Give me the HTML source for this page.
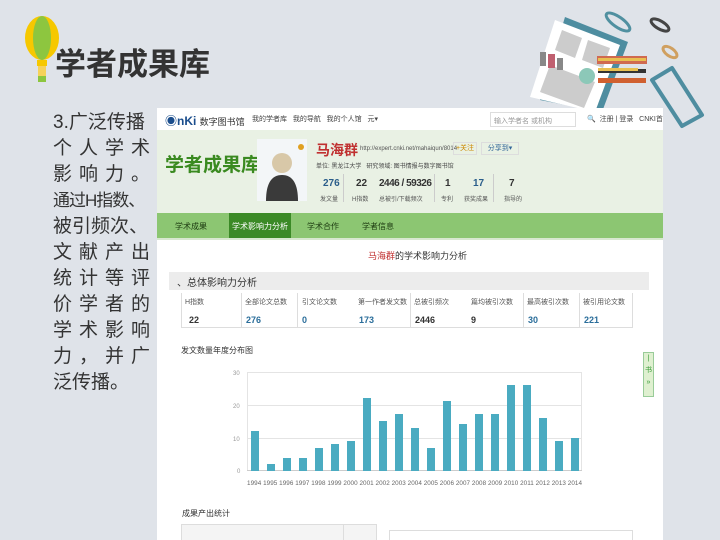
<!DOCTYPE html>
<html><head><meta charset="utf-8"><style>
*{margin:0;padding:0;box-sizing:border-box}
body{width:720px;height:540px;overflow:hidden;background:#dfe3e9;font-family:"Liberation Sans","Noto Sans CJK SC",sans-serif;position:relative;color:#333}
.a{position:absolute;white-space:nowrap}
.ln{position:absolute;left:53px;width:97px;display:flex;justify-content:space-between;font-size:19px;color:#333;line-height:22px;white-space:nowrap}
.sm{font-size:8px;color:#444}
</style></head><body>
<svg class="a" style="left:22px;top:16px" width="40" height="68" viewBox="0 0 40 68">
<ellipse cx="20" cy="22" rx="17" ry="22" fill="#f6c800"/>
<ellipse cx="20" cy="22" rx="9" ry="22" fill="#8dc63f"/>
<rect x="15" y="44" width="10" height="6" fill="#f6c800"/>
<rect x="16" y="50" width="8" height="10" fill="#f6d25a"/>
<rect x="16" y="60" width="8" height="6" fill="#8dc63f"/>
</svg>
<div class="a" style="left:55px;top:39px;font-size:31px;font-weight:bold;color:#333">学者成果库</div>
<svg class="a" style="left:520px;top:0" width="200" height="130" viewBox="0 0 200 130">
<polygon points="45,17 108,42 82,112 20,100" fill="#4e8da0"/>
<polygon points="35,20 100,45 75,112 10,97" fill="#fff"/>
<polygon points="42,30 62,38 55,58 35,50" fill="#ccc"/>
<polygon points="68,40 90,48 83,68 62,60" fill="#ccc"/>
<polygon points="30,65 75,82 64,108 20,92" fill="#ccc"/>
<rect x="20" y="52" width="6" height="14" fill="#888"/><rect x="28" y="54" width="7" height="14" fill="#c06070"/><rect x="37" y="58" width="6" height="12" fill="#888"/>
<circle cx="67" cy="76" r="8" fill="#8cc8b8"/>
<rect x="77" y="56" width="50" height="8" fill="#d06a50"/><rect x="78" y="58" width="48" height="3" fill="#e8c050"/>
<rect x="78" y="69" width="48" height="4" fill="#333"/><rect x="78" y="68" width="40" height="3" fill="#e8c050"/>
<rect x="78" y="78" width="48" height="5" fill="#d06030"/>
<ellipse cx="98" cy="22" rx="14" ry="5" fill="none" stroke="#5090a0" stroke-width="3" transform="rotate(35 98 22)"/>
<ellipse cx="140" cy="25" rx="10" ry="4" fill="none" stroke="#444" stroke-width="3" transform="rotate(30 140 25)"/>
<ellipse cx="150" cy="52" rx="8" ry="4" fill="none" stroke="#d0a060" stroke-width="3" transform="rotate(35 150 52)"/>
<polygon points="132,80 152,68 182,115 162,126" fill="none" stroke="#4e8da0" stroke-width="4" stroke-linejoin="round"/>
</svg>
<div class="ln" style="top:112px">3.广泛传播</div>
<div class="ln" style="top:138px"><span>个</span><span>人</span><span>学</span><span>术</span></div>
<div class="ln" style="top:164px"><span>影</span><span>响</span><span>力</span><span>。</span></div>
<div class="ln" style="top:190px;font-size:17px;letter-spacing:-1px">通过H指数、</div>
<div class="ln" style="top:216px">被引频次、</div>
<div class="ln" style="top:242px"><span>文</span><span>献</span><span>产</span><span>出</span></div>
<div class="ln" style="top:268px"><span>统</span><span>计</span><span>等</span><span>评</span></div>
<div class="ln" style="top:294px"><span>价</span><span>学</span><span>者</span><span>的</span></div>
<div class="ln" style="top:320px"><span>学</span><span>术</span><span>影</span><span>响</span></div>
<div class="ln" style="top:346px"><span>力</span><span>，</span><span>并</span><span>广</span></div>
<div class="ln" style="top:372px;justify-content:flex-start">泛传播。</div>
<div class="a" style="left:157px;top:108px;width:506px;height:432px;background:#fff;overflow:hidden">
 <div class="a" style="left:8px;top:4px;font-size:12px;font-weight:bold;color:#1a4d8c">◉nKi <span style="font-weight:normal;font-size:9px;color:#333">数字图书馆</span></div>
 <div class="a" style="left:95px;top:6px;font-size:7px;color:#444">我的学者库 &nbsp; 我的导航 &nbsp; 我的个人馆 &nbsp; 元▾</div>
 <div class="a" style="left:333px;top:4px;width:86px;height:15px;border:1px solid #ddd;font-size:7px;color:#999;padding:3px">输入学者名 或机构</div>
 <div class="a" style="left:430px;top:6px;font-size:7px;color:#444">🔍 &nbsp;注册 | 登录 &nbsp; CNKI首页</div>
 <div class="a" style="left:0;top:22px;width:506px;height:83px;background:#e9f1e4"></div>
 <div class="a" style="left:8px;top:42px;font-size:19px;font-weight:bold;color:#3a8a20">学者成果库</div>
 <div class="a" style="left:100px;top:31px;width:50px;height:62px;background:#f3f6f8"></div>
 <svg class="a" style="left:100px;top:31px" width="50" height="62"><circle cx="25" cy="24" r="10" fill="#d8c8a8"/><path d="M9 62 Q9 36 25 36 Q41 36 41 62Z" fill="#3a3a3a"/><circle cx="44" cy="8" r="3" fill="#e0a020"/></svg>
 <div class="a" style="left:159px;top:32px;font-size:14px;font-weight:bold;color:#c03030">马海群</div>
 <div class="a" style="left:203px;top:38px;font-size:6px;color:#555">http://expert.cnki.net/mahaiqun/8014</div>
 <div class="a" style="left:296px;top:34px;width:24px;height:13px;border:1px solid #ddd;font-size:7px;color:#c80;text-align:center;line-height:11px">+关注</div>
 <div class="a" style="left:324px;top:34px;width:38px;height:13px;border:1px solid #ddd;font-size:7px;color:#369;text-align:center;line-height:11px">分享到▾</div>
 <div class="a" style="left:159px;top:53px;font-size:6px;color:#444">单位: 黑龙江大学 &nbsp; 研究领域: 图书情报与数字图书馆</div>
 <div class="a" style="left:166px;top:70px;font-size:10px;font-weight:bold;color:#2a5d8a">276</div>
 <div class="a" style="left:199px;top:70px;font-size:10px;font-weight:bold">22</div>
 <div class="a" style="left:222px;top:70px;font-size:10px;font-weight:bold;letter-spacing:-0.5px">2446 / 59326</div>
 <div class="a" style="left:288px;top:70px;font-size:10px;font-weight:bold">1</div>
 <div class="a" style="left:316px;top:70px;font-size:10px;font-weight:bold;color:#2a5d8a">17</div>
 <div class="a" style="left:352px;top:70px;font-size:10px;font-weight:bold">7</div>
 <div class="a" style="left:163px;top:86px;font-size:6px;color:#555">发文量</div>
 <div class="a" style="left:195px;top:86px;font-size:6px;color:#555">H指数</div>
 <div class="a" style="left:222px;top:86px;font-size:6px;color:#555">总被引/下载频次</div>
 <div class="a" style="left:284px;top:86px;font-size:6px;color:#555">专利</div>
 <div class="a" style="left:307px;top:86px;font-size:6px;color:#555">获奖成果</div>
 <div class="a" style="left:347px;top:86px;font-size:6px;color:#555">指导的</div>
 <div class="a" style="left:186px;top:66px;width:1px;height:28px;background:#ccc"></div>
 <div class="a" style="left:277px;top:66px;width:1px;height:28px;background:#ccc"></div>
 <div class="a" style="left:336px;top:66px;width:1px;height:28px;background:#ccc"></div>
 <div class="a" style="left:0;top:105px;width:506px;height:25px;background:#8cc672"></div>
 <div class="a" style="left:72px;top:105px;width:62px;height:25px;background:#3b8a26"></div>
 <div class="a" style="left:18px;top:113px;font-size:8px;color:#1c3a10">学术成果</div>
 <div class="a" style="left:75px;top:113px;font-size:8px;color:#fff">学术影响力分析</div>
 <div class="a" style="left:150px;top:113px;font-size:8px;color:#1c3a10">学术合作</div>
 <div class="a" style="left:205px;top:113px;font-size:8px;color:#1c3a10">学者信息</div>
 <div class="a" style="left:0;top:130px;width:506px;height:2px;background:#d8e8d0"></div>
 <div class="a" style="left:211px;top:141px;font-size:9px;color:#333"><span style="color:#c03030">马海群</span>的学术影响力分析</div>
 <div class="a" style="left:12px;top:164px;width:480px;height:18px;background:#ececec;font-size:10px;padding:2px 8px">、总体影响力分析</div>
 <div class="a" style="left:24px;top:185px;width:452px;height:35px;border:1px solid #ddd;border-top:none"></div>
 <div class="a" style="left:28px;top:189px;font-size:7px;color:#555">H指数</div>
 <div class="a" style="left:88px;top:189px;font-size:7px;color:#555">全部论文总数</div>
 <div class="a" style="left:145px;top:189px;font-size:7px;color:#555">引文论文数</div>
 <div class="a" style="left:201px;top:189px;font-size:7px;color:#555">第一作者发文数</div>
 <div class="a" style="left:257px;top:189px;font-size:7px;color:#555">总被引频次</div>
 <div class="a" style="left:314px;top:189px;font-size:7px;color:#555">篇均被引次数</div>
 <div class="a" style="left:370px;top:189px;font-size:7px;color:#555">最高被引次数</div>
 <div class="a" style="left:426px;top:189px;font-size:7px;color:#555">被引用论文数</div>
 <div class="a" style="left:32px;top:207px;font-size:9px;font-weight:bold">22</div>
 <div class="a" style="left:89px;top:207px;font-size:9px;font-weight:bold;color:#2a6d9a">276</div>
 <div class="a" style="left:145px;top:207px;font-size:9px;font-weight:bold;color:#2a6d9a">0</div>
 <div class="a" style="left:202px;top:207px;font-size:9px;font-weight:bold;color:#2a6d9a">173</div>
 <div class="a" style="left:258px;top:207px;font-size:9px;font-weight:bold">2446</div>
 <div class="a" style="left:314px;top:207px;font-size:9px;font-weight:bold">9</div>
 <div class="a" style="left:371px;top:207px;font-size:9px;font-weight:bold;color:#2a6d9a">30</div>
 <div class="a" style="left:427px;top:207px;font-size:9px;font-weight:bold;color:#2a6d9a">221</div>
 <div class="a" style="left:84px;top:185px;width:1px;height:35px;background:#ddd"></div>
 <div class="a" style="left:140px;top:185px;width:1px;height:35px;background:#ddd"></div>
 <div class="a" style="left:253px;top:185px;width:1px;height:35px;background:#ddd"></div>
 <div class="a" style="left:366px;top:185px;width:1px;height:35px;background:#ddd"></div>
 <div class="a" style="left:422px;top:185px;width:1px;height:35px;background:#ddd"></div>
 <div class="a" style="left:24px;top:237px;font-size:8px;color:#333">发文数量年度分布图</div>
 <div class="a" style="left:486px;top:244px;width:11px;height:45px;background:#dff0d0;border:1px solid #9c9;font-size:7px;color:#393;text-align:center;line-height:12px">|<br>书<br>»</div>
 <svg class="a" style="left:70px;top:256px" width="360" height="130" viewBox="0 0 360 130">
  <g stroke="#e4e4e4" stroke-width="1">
   <line x1="20" y1="8.5" x2="355" y2="8.5"/><line x1="20" y1="41.5" x2="355" y2="41.5"/><line x1="20" y1="74.5" x2="355" y2="74.5"/>
   <line x1="20.5" y1="8" x2="20.5" y2="107"/><line x1="354.5" y1="8" x2="354.5" y2="107"/>
  </g>
  <line x1="20" y1="106.5" x2="355" y2="106.5" stroke="#ccc"/>
  <g font-size="6" fill="#999" font-family="Liberation Sans"><text x="6" y="11">30</text><text x="6" y="44">20</text><text x="6" y="77">10</text><text x="10" y="109">0</text></g>
  <g fill="#4aabc1">
  <rect x="24" y="67" width="8" height="40"/><rect x="40" y="100" width="8" height="7"/><rect x="56" y="94" width="8" height="13"/><rect x="72" y="94" width="8" height="13"/><rect x="88" y="84" width="8" height="23"/><rect x="104" y="80" width="8" height="27"/><rect x="120" y="77" width="8" height="30"/><rect x="136" y="34" width="8" height="73"/><rect x="152" y="57" width="8" height="50"/><rect x="168" y="50" width="8" height="57"/><rect x="184" y="64" width="8" height="43"/><rect x="200" y="84" width="8" height="23"/><rect x="216" y="37" width="8" height="70"/><rect x="232" y="60" width="8" height="47"/><rect x="248" y="50" width="8" height="57"/><rect x="264" y="50" width="8" height="57"/><rect x="280" y="21" width="8" height="86"/><rect x="296" y="21" width="8" height="86"/><rect x="312" y="54" width="8" height="53"/><rect x="328" y="77" width="8" height="30"/><rect x="344" y="74" width="8" height="33"/>
  </g>
  <text x="20" y="121" font-size="6.3" fill="#666" font-family="Liberation Sans" textLength="335">1994 1995 1996 1997 1998 1999 2000 2001 2002 2003 2004 2005 2006 2007 2008 2009 2010 2011 2012 2013 2014</text>
 </svg>
 <div class="a" style="left:25px;top:400px;font-size:8px;color:#333">成果产出统计</div>
 <div class="a" style="left:24px;top:416px;width:196px;height:20px;border:1px solid #ddd;background:#f4f4f4"></div>
 <div class="a" style="left:186px;top:416px;width:1px;height:20px;background:#ddd"></div>
 <div class="a" style="left:232px;top:422px;width:244px;height:14px;border:1px solid #ddd"></div>
</div>
</body></html>
